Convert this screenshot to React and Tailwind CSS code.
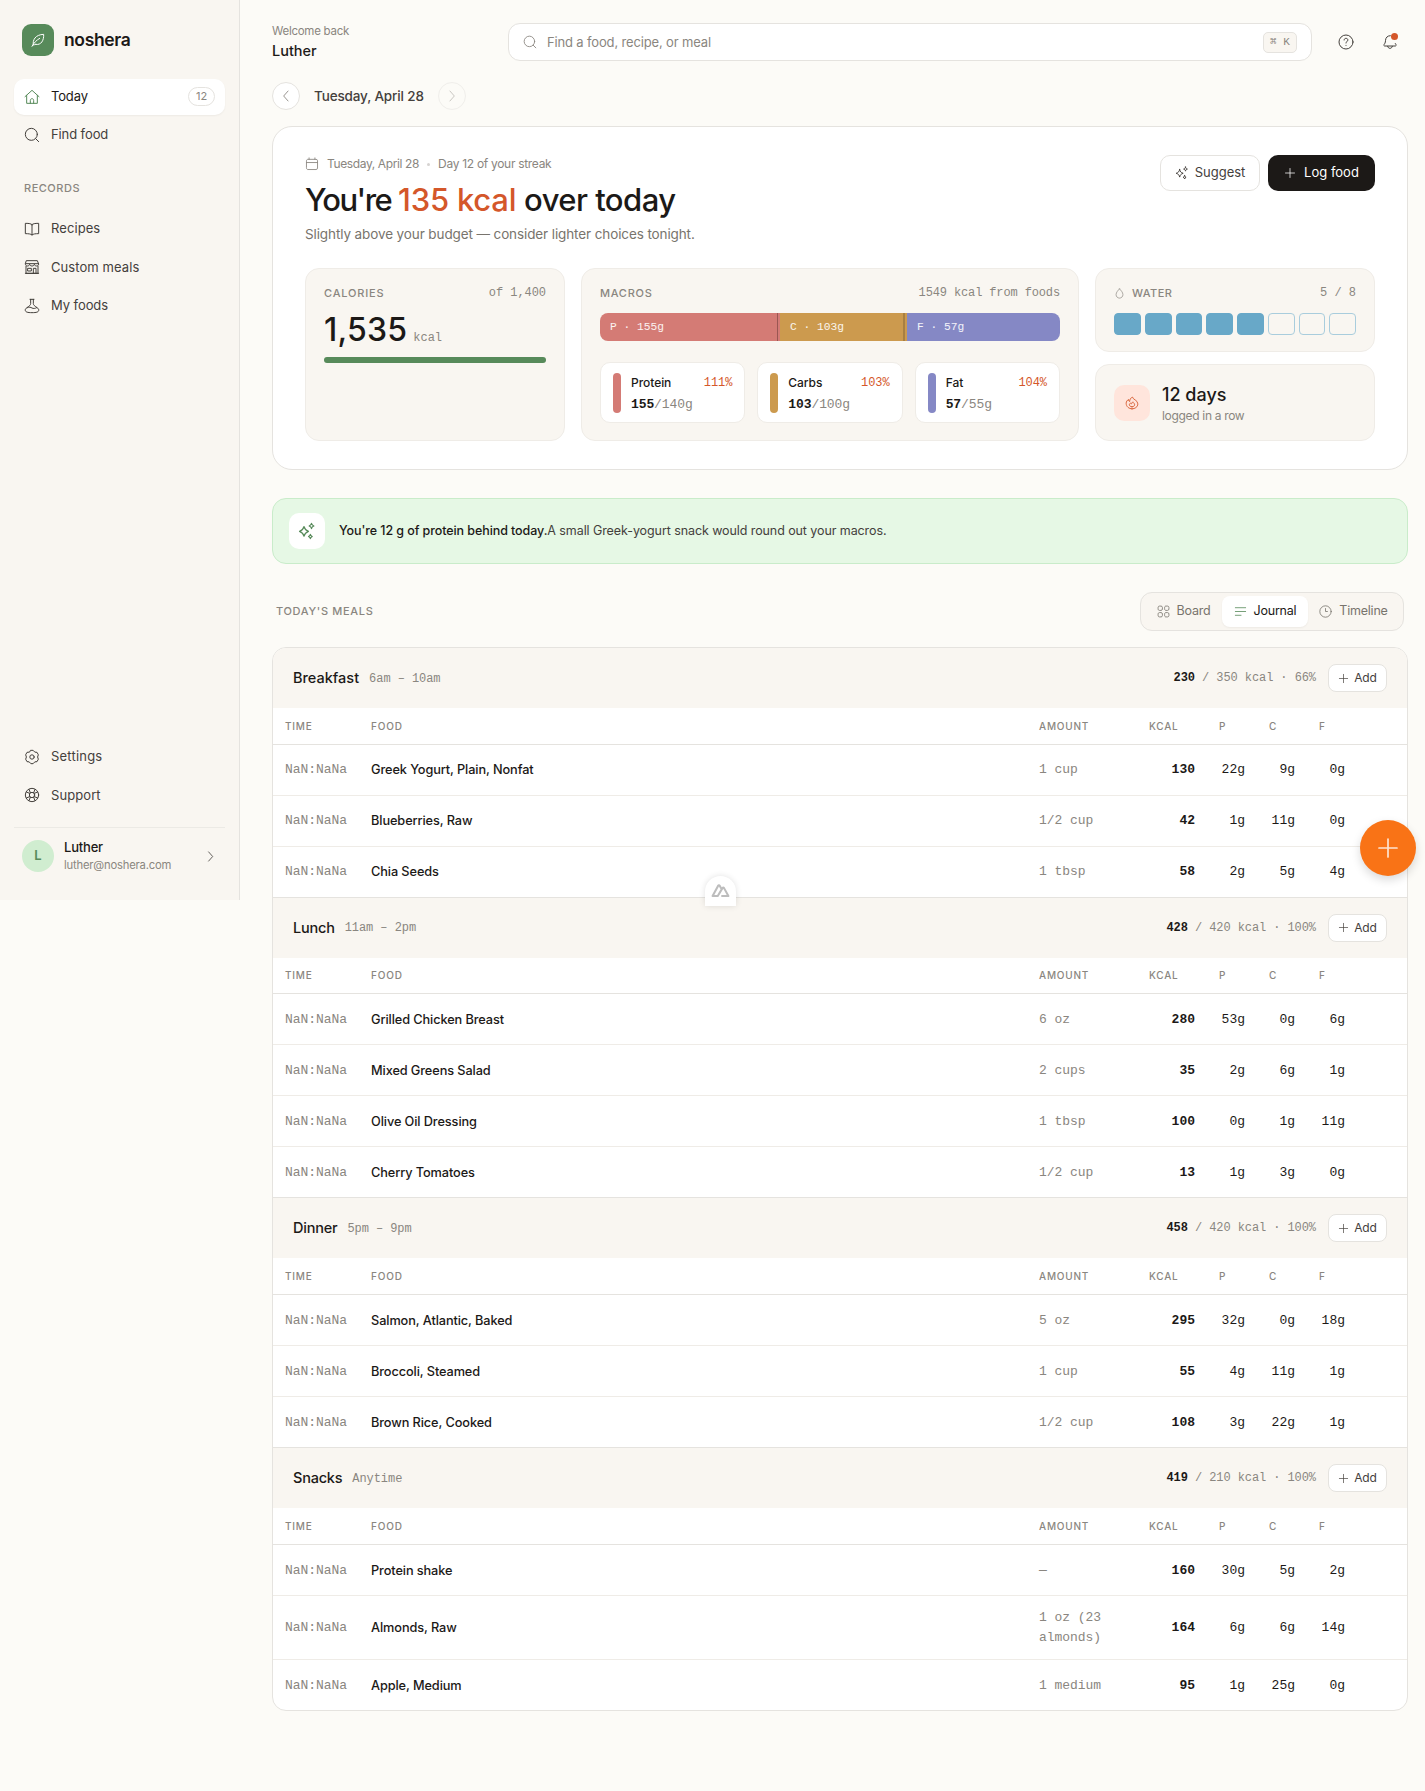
import React from "react";

const S = ({ size = 16, sw = 1.5, className = "", children }) => (
  <svg width={size} height={size} viewBox="0 0 24 24" fill="none" stroke="currentColor" strokeWidth={sw} strokeLinecap="round" strokeLinejoin="round" className={"shrink-0 " + className}>{children}</svg>
);
const Leaf = (p) => <S {...p}><path d="M5 19.500C3.500 12 8 4 20.500 3.500C21 12 17 20.500 8.500 18.500" /><path d="M3 21.500C6 16 9.500 12.500 14.500 9.500" /><path d="M5 19C6 19.500 7.500 19 8.500 18.500" /></S>;
const Home = (p) => <S {...p}><path d="M1.500 11.500L12 2L22.500 11.500" /><path d="M4 9.500V21.500H20V9.500" /><path d="M9.500 21.500V17C9.500 15.600 10.600 14.500 12 14.500S14.500 15.600 14.500 17V21.500" /></S>;
const Search = (p) => <S {...p}><circle cx="11" cy="11" r="9" /><path d="M17.500 17.500L22 22" /></S>;
const Book = (p) => <S {...p}><path d="M12 5.500V21" /><path d="M12 5.500C10.500 4 8 3.500 2 3.500V19C7 19 10 19.300 12 21C14 19.300 17 19 22 19V3.500C16 3.500 13.500 4 12 5.500Z" /></S>;
const Store = (p) => <S {...p}><path d="M3 11V21.500H21V11" /><path d="M2 21.500H22" /><path d="M4 2.500H20L22 7.500C22 9.500 20.500 10.500 19 10.500S15.500 9.500 15.500 8C15.500 9.500 14 10.500 12 10.500S8.500 9.500 8.500 8C8.500 9.500 6.500 10.500 5 10.500S2 9.500 2 7.500Z" /><path d="M2.500 7H21.500" /><path d="M6 14H11V18H6ZM14 21V14H18V21" /></S>;
const Flask = (p) => <S {...p}><path d="M9 2H15M10 2V8.500C10 10.500 8 12 5 14C2 16 1.500 17.500 2 19C2.700 21 5 22 12 22S21.300 21 22 19C22.500 17.500 22 16 19 14C16 12 14 10.500 14 8.500V2" /><path d="M5 14.500C8 13 10 14 12 15S16.500 16 19 14.500" /></S>;
const Gear = (p) => <S {...p}><path d="M10.300 2H13.700L16.200 4.700L19.500 5L21.500 8.700L20.400 12L21.500 15.300L19.500 19L16.200 19.300L13.700 22H10.300L7.800 19.300L4.500 19L2.500 15.300L3.600 12L2.500 8.700L4.500 5L7.800 4.700Z" /><circle cx="12" cy="12" r="3.300" /></S>;
const Buoy = (p) => <S {...p}><circle cx="12" cy="12" r="10" /><circle cx="12" cy="12" r="4" /><path d="M9.500 8.500L7.500 3.500M14.500 8.500L16.500 3.500M9.500 15.500L7.500 20.500M14.500 15.500L16.500 20.500M8.500 9.500L3.500 7.500M8.500 14.500L3.500 16.500M15.500 9.500L20.500 7.500M15.500 14.500L20.500 16.500" /></S>;
const Right = (p) => <S {...p}><path d="M8.500 3.500L16 12L8.500 20.500" /></S>;
const Left = (p) => <S {...p}><path d="M15.500 3.500L8 12L15.500 20.500" /></S>;
const Help = (p) => <S {...p}><circle cx="12" cy="12" r="10.500" /><path d="M9.200 9C9.200 7.500 10.400 6.500 12 6.500S14.800 7.500 14.800 9C14.800 11 12 11.300 12 13.500" /><path d="M12 17V17.100" /></S>;
const Bell = (p) => <S {...p}><path d="M12.500 2.500C8 2.500 5.500 5.500 5.300 9.500C5.100 13.500 4 14.500 3 16C2.400 17 3 18 4.200 18H19.800C21 18 21.600 17 21 16L20 14.300" /><path d="M8.500 18.500C8.800 20.300 10.200 21.500 12 21.500S15.200 20.300 15.500 18.500" /></S>;
const Cal = (p) => <S {...p}><path d="M2.500 6.500C2.500 5 3.500 4 5 4H19C20.500 4 21.500 5 21.500 6.500V19C21.500 20.500 20.500 21.500 19 21.500H5C3.500 21.500 2.500 20.500 2.500 19ZM2.500 9.500H21.500M7 1.500V4M17 1.500V4" /></S>;
const Spark = (p) => <S {...p}><path d="M8 6C9 10 10 11 14 12.500C10 14 9 15 8 19C7 15 6 14 2 12.500C6 11 7 10 8 6Z" /><path d="M18 1.800C18.500 4 19 4.500 21.200 5.300C19 6 18.500 6.500 18 8.800C17.500 6.500 17 6 14.800 5.300C17 4.500 17.500 4 18 1.800Z" /><path d="M16.500 16.500C17 18.300 17.500 18.700 19 19.300C17.500 20 17 20.400 16.500 22.200C16 20.400 15.500 20 14 19.300C15.500 18.700 16 18.300 16.500 16.500Z" /></S>;
const Plus = (p) => <S {...p}><path d="M12 3V21M3 12H21" /></S>;
const Drop = (p) => <S {...p}><path d="M12 2C9 5 4.500 9.500 4.500 14.500C4.500 19 8 22 12 22S19.500 19 19.500 14.500C19.500 9.500 15 5 12 2Z" /></S>;
const Flame = (p) => <S {...p}><path d="M12 22C6.500 22 2 18 2 12.500C2 9.500 4 7 6 6C6 8 6.500 9 8 9.500C8 6 9.500 3 13 2C13 6 22 7 22 13.500C22 18.500 17.500 22 12 22Z" /><path d="M12 18.500C9.500 18.500 7.500 17 7.500 14.800C7.500 13 9 12.500 9.500 12C10 13.500 11 13.500 11.500 13C12 12 12 11 13.500 10C14 12 16.500 12.500 16.500 15C16.500 17 14.500 18.500 12 18.500Z" /></S>;
const Grid = (p) => <S {...p}><path d="M2 4.500C2 3 3 2 4.500 2H7.500C9 2 10 3 10 4.500V7.500C10 9 9 10 7.500 10H4.500C3 10 2 9 2 7.500ZM14 4.500C14 3 15 2 16.500 2H19.500C21 2 22 3 22 4.500V7.500C22 9 21 10 19.500 10H16.500C15 10 14 9 14 7.500ZM2 16.500C2 15 3 14 4.500 14H7.500C9 14 10 15 10 16.500V19.500C10 21 9 22 7.500 22H4.500C3 22 2 21 2 19.500ZM14 16.500C14 15 15 14 16.500 14H19.500C21 14 22 15 22 16.500V19.500C22 21 21 22 19.500 22H16.500C15 22 14 21 14 19.500Z" /></S>;
const Lines = (p) => <S {...p}><path d="M2.500 5H21.500M2.500 12H21.500M2.500 19H13" /></S>;
const Clock = (p) => <S {...p}><circle cx="12" cy="12" r="10.500" /><path d="M12 6.500V12H15.500" /></S>;

const T = ({ className = "", children }) => <span className={"whitespace-nowrap " + className}>{children}</span>;
const mono = "font-['Liberation_Mono',monospace]";

const NavItem = ({ icon: Icon, label, track = "tracking-[0.08px]", active, badge }) => (
  <div className={"flex h-[36.25px] items-center gap-[11px] rounded-[10px] px-2.5 text-[13px] " + (active ? "bg-white text-[#1c1917] shadow-[0_1px_2px_rgba(0,0,0,0.05)]" : "text-[#44403c]")}>
    <Icon size={16} className={active ? "text-[#578a5a]" : ""} />
    <T className={track}>{label}</T>
    {badge && <span className="ml-auto flex h-[19px] w-[27px] items-center justify-center rounded-full border border-[#e5e3df] text-[11px] text-[#8a8680]">{badge}</span>}
  </div>
);

const MacroCard = ({ color, name, pct, val, goal }) => (
  <div className="flex h-[61px] gap-2.5 rounded-[10px] border border-[#efece7] bg-white px-3 py-2.5">
    <div className={"h-10 w-2 rounded-full " + color} />
    <div className="min-w-0 flex-1">
      <div className="flex h-5 items-center justify-between">
        <T className="text-xs font-medium tracking-[-0.05px]">{name}</T>
        <span className={"text-xs tracking-[-0.06px] text-[#d4572a] " + mono}>{pct}</span>
      </div>
      <div className={"mt-[2px] flex h-5 items-center text-[13px] tracking-[-0.1px] text-[#8a8680] " + mono}><span className="font-bold text-[#1c1917]">{val}</span>/{goal}</div>
    </div>
  </div>
);

const cols = "grid grid-cols-[86px_668px_96px_66px_50px_50px_50px_70px] items-center";
const meals = [
  { name: "Breakfast", time: "6am – 10am", got: "230", goal: "350", pct: "66%", rows: [["Greek Yogurt, Plain, Nonfat", "1 cup", "130", "22g", "9g", "0g"], ["Blueberries, Raw", "1/2 cup", "42", "1g", "11g", "0g"], ["Chia Seeds", "1 tbsp", "58", "2g", "5g", "4g"]] },
  { name: "Lunch", time: "11am – 2pm", got: "428", goal: "420", pct: "100%", rows: [["Grilled Chicken Breast", "6 oz", "280", "53g", "0g", "6g"], ["Mixed Greens Salad", "2 cups", "35", "2g", "6g", "1g"], ["Olive Oil Dressing", "1 tbsp", "100", "0g", "1g", "11g"], ["Cherry Tomatoes", "1/2 cup", "13", "1g", "3g", "0g"]] },
  { name: "Dinner", time: "5pm – 9pm", got: "458", goal: "420", pct: "100%", rows: [["Salmon, Atlantic, Baked", "5 oz", "295", "32g", "0g", "18g"], ["Broccoli, Steamed", "1 cup", "55", "4g", "11g", "1g"], ["Brown Rice, Cooked", "1/2 cup", "108", "3g", "22g", "1g"]] },
  { name: "Snacks", time: "Anytime", got: "419", goal: "210", pct: "100%", rows: [["Protein shake", "—", "160", "30g", "5g", "2g"], ["Almonds, Raw", "1 oz (23 almonds)", "164", "6g", "6g", "14g"], ["Apple, Medium", "1 medium", "95", "1g", "25g", "0g"]] },
];

const Meal = ({ m, first }) => (
  <section>
    <header className={"flex items-center bg-[#f9f6f1] px-5 " + (first ? "h-[60px]" : "h-[61px] border-t border-[#e5e3df]")}>
      <T className={"text-[14.5px] font-medium " + (first ? "" : "tracking-[-0.22px]")}>{m.name}</T>
      <span className={"mt-px ml-2.5 text-xs tracking-[-0.06px] text-[#8a8680] " + mono}>{m.time}</span>
      <span className={"ml-auto text-xs tracking-[-0.08px] text-[#8a8680] " + mono}><b className="text-[#1c1917]">{m.got}</b> / {m.goal} kcal · {m.pct}</span>
      <button className="ml-3 flex h-7 w-[59px] items-center justify-center gap-[5px] rounded-lg border border-[#e5e3df] bg-white text-xs tracking-[-0.15px] text-[#44403c]"><Plus size={11} />Add</button>
    </header>
    <div className={cols + " border-b border-[#e5e3df] px-3 pt-px text-[10px] font-medium tracking-[0.8px] text-[#8a8680] " + (first ? "h-[36.5px]" : "h-[36.85px]")}>
      <span>TIME</span><span>FOOD</span><span>AMOUNT</span><span className="pl-3.5">KCAL</span><span className="pl-[18px]">P</span><span className="pl-[18px]">C</span><span className="pl-[18px]">F</span>
    </div>
    {m.rows.map((r, i) => (
      <div key={i} className={cols + " px-3 text-[13px] " + (first ? "" : "pt-px ") + (i === m.rows.length - 1 ? "h-[50px]" : r[1].length > 12 ? "h-16 border-b border-[#efece7]" : "h-[51px] border-b border-[#efece7]")}>
        <span className={"tracking-[-0.05px] text-[#8a8680] " + mono}>NaN:NaNa</span>
        <T className="text-[12.75px] font-medium tracking-[-0.1px]">{r[0]}</T>
        <span className={"pr-5 leading-5 tracking-[-0.05px] text-[#8a8680] " + mono}>{r[1]}</span>
        <span className={"pr-1.5 text-right font-bold " + mono}>{r[2]}</span>
        <span className={"pr-1.5 text-right " + mono}>{r[3]}</span>
        <span className={"pr-1.5 text-right " + mono}>{r[4]}</span>
        <span className={"pr-1.5 text-right " + mono}>{r[5]}</span>
      </div>
    ))}
  </section>
);

export default function App() {
  return (
    <div className="relative flex h-[1791px] w-[1425px] items-start bg-[#fcfbf7] font-['Inter',sans-serif] text-[#1c1917]">
      <aside className="flex h-[900px] w-60 shrink-0 flex-col border-r border-[#e5e3df] bg-[#f9f6f1] px-3.5">
        <div className="mt-6 flex items-center gap-2.5 px-2">
          <div className="flex size-8 items-center justify-center rounded-[9px] bg-[#578a5a] text-white"><Leaf size={16} /></div>
          <T className="text-[17.5px] font-semibold tracking-[-0.35px]">noshera</T>
        </div>
        <nav className="mt-[22.5px] flex flex-col gap-[2px]">
          <NavItem icon={Home} label="Today" track="tracking-[-0.15px]" active badge="12" />
          <NavItem icon={Search} label="Find food" track="tracking-[-0.1px]" />
        </nav>
        <T className="mt-[27px] px-2.5 text-[11px] font-medium tracking-[0.51px] text-[#8a8680]">RECORDS</T>
        <nav className="mt-[14.5px] flex flex-col gap-[2px]">
          <NavItem icon={Book} label="Recipes" />
          <NavItem icon={Store} label="Custom meals" />
          <NavItem icon={Flask} label="My foods" track="tracking-[-0.07px]" />
        </nav>
        <nav className="mt-auto flex flex-col gap-[2px]">
          <NavItem icon={Gear} label="Settings" track="tracking-[0.2px]" />
          <NavItem icon={Buoy} label="Support" />
        </nav>
        <div className="mt-[13.5px] mb-[26px] flex items-center border-t border-[#eceae5] px-2 pt-2.5">
          <div className="flex size-8 items-center justify-center rounded-full bg-[#d0edd0] text-[13px] font-semibold text-[#578a5a]">L</div>
          <div className="ml-2.5 flex flex-col gap-px">
            <T className="text-[13px] leading-[18px] font-medium tracking-[-0.2px]">Luther</T>
            <T className="text-[11.25px] leading-[17px] tracking-[-0.2px] text-[#8a8680]">luther@noshera.com</T>
          </div>
          <Right size={13} className="ml-auto text-[#44403c]" />
        </div>
      </aside>

      <main className="ml-8 w-[1136px]">
        <div className="flex h-[82px] items-center pt-[2px]">
          <div className="flex w-[236px] flex-col">
            <T className="text-[11.5px] leading-4 tracking-[-0.27px] text-[#8a8680]">Welcome back</T>
            <T className="mt-px text-[14.5px] leading-[22px] font-medium">Luther</T>
          </div>
          <div className="flex h-[38px] w-[804px] items-center rounded-xl border border-[#e5e3df] bg-white px-[14px] text-[13px] text-[#8a8680]">
            <Search size={14} />
            <T className="mt-px ml-[10px] tracking-[-0.15px]">Find a food, recipe, or meal</T>
            <span className={"ml-auto flex h-[21px] w-[34px] items-center justify-center rounded-[5px] border border-[#e5e3df] bg-[#f9f6f1] text-[11px] " + mono}>⌘ K</span>
          </div>
          <Help size={16} className="ml-[26px] text-[#44403c]" />
          <span className="relative ml-7 text-[#44403c]"><Bell size={16} /><i className="absolute -top-px right-0 size-[7px] rounded-full bg-[#d4572a]" /></span>
        </div>
        <div className="flex h-7 items-center">
          <span className="flex size-7 items-center justify-center rounded-full border border-[#e5e3df] bg-white text-[#8a8680]"><Left size={14} /></span>
          <T className="ml-3.5 w-[124px] text-[13.5px] font-medium tracking-[-0.14px] text-[#44403c]">Tuesday, April 28</T>
          <span className="flex size-7 items-center justify-center rounded-full border border-[#e5e3df] text-[#8a8680] opacity-50"><Right size={14} /></span>
        </div>

        <section className="mt-4 h-[344px] rounded-[20px] border border-[#e5e3df] bg-white px-8 pt-7">
          <div className="flex justify-between">
            <div className="flex flex-col">
              <div className="flex h-[18px] items-center text-xs text-[#8a8680]"><Cal size={14} /><T className="ml-2 tracking-[-0.38px]">Tuesday, April 28</T><i className="mx-2 size-[3px] rounded-full bg-[#d6d3d1]" /><T className="tracking-[-0.3px]">Day 12 of your streak</T></div>
              <h1 className="mt-[7px] text-[31px] leading-10 font-medium tracking-[-0.55px] whitespace-nowrap"><span className="tracking-[-1.55px]">You're </span><span className="tracking-[-0.2px] text-[#d4572a]">135 kcal</span> over today</h1>
              <p className="mt-1 text-[13.500px] leading-5 tracking-[-0.11px] whitespace-nowrap text-[#78746d]">Slightly above your budget — consider lighter choices tonight.</p>
            </div>
            <div className="flex gap-2 text-[13px]">
              <button className="flex h-9 w-[100px] items-center justify-center gap-1.5 rounded-[10px] border border-[#e5e3df] text-[#44403c]"><Spark size={14} sw={1.7} />Suggest</button>
              <button className="flex h-9 w-[107px] items-center justify-center gap-2 rounded-[10px] bg-[#1c1917] text-white"><Plus size={12} />Log food</button>
            </div>
          </div>
          <div className="mt-[23.5px] grid h-[173.5px] grid-cols-[260px_498px_280px] gap-4">
            <div className="rounded-[14px] border border-[#efece7] bg-[#f9f6f1] px-[18px] pt-[15.5px]">
              <div className="flex h-[18px] items-center justify-between text-[#8a8680]"><T className="text-[11px] font-medium tracking-[0.82px]">CALORIES</T><span className={"text-xs tracking-[-0.06px] " + mono}>of 1,400</span></div>
              <div className="mt-2 flex items-baseline gap-1.5"><T className="text-[32px] leading-10 font-medium tracking-[0.2px]">1,535</T><span className={"text-xs text-[#8a8680] " + mono}>kcal</span></div>
              <div className="mt-[7px] h-1.5 rounded-full bg-[#578a5a]" />
            </div>
            <div className="rounded-[14px] border border-[#efece7] bg-[#f9f6f1] px-[18px] pt-[15.5px]">
              <div className="flex h-[18px] items-center justify-between text-[#8a8680]"><T className="text-[11px] font-medium tracking-[0.72px]">MACROS</T><span className={"text-xs tracking-[-0.13px] " + mono}>1549 kcal from foods</span></div>
              <div className={"mt-[11px] flex h-7 overflow-hidden rounded-lg text-[11.25px] text-white/90 " + mono}>
                <div className="flex w-[180px] items-center bg-[#d47b75] pl-2.5">P · 155g<i className="mr-[2px] ml-auto h-full w-px bg-[#9a5653]" /></div>
                <div className="flex w-[127px] items-center bg-[#cc9a4e] pl-2.5">C · 103g<i className="mr-[2px] ml-auto h-full w-[2px] bg-[#a87f42]" /></div>
                <div className="flex flex-1 items-center bg-[#8588c5] pl-2.5">F · 57g</div>
              </div>
              <div className="mt-[21px] grid grid-cols-3 gap-3">
                <MacroCard color="bg-[#d47b75]" name="Protein" pct="111%" val="155" goal="140g" />
                <MacroCard color="bg-[#cc9a4e]" name="Carbs" pct="103%" val="103" goal="100g" />
                <MacroCard color="bg-[#8588c5]" name="Fat" pct="104%" val="57" goal="55g" />
              </div>
            </div>
            <div className="flex flex-col justify-between">
              <div className="h-[84px] rounded-[14px] border border-[#efece7] bg-[#f9f6f1] px-[18px] pt-[15.5px]">
                <div className="flex h-[18px] items-center text-[#8a8680]"><Drop size={11} /><T className="ml-[7px] text-[11px] font-medium tracking-[0.42px]">WATER</T><span className={"ml-auto text-xs " + mono}>5 / 8</span></div>
                <div className="mt-[11px] grid h-[22px] grid-cols-8 gap-1">{[0, 1, 2, 3, 4, 5, 6, 7].map((i) => <i key={i} className={"rounded-[4px] border " + (i < 5 ? "border-[#68a8c8] bg-[#68a8c8]" : "border-[#a9cddd]")} />)}</div>
              </div>
              <div className="flex h-[77px] items-center rounded-[14px] border border-[#efece7] bg-[#f9f6f1] px-[18px]">
                <div className="flex size-9 items-center justify-center rounded-[10px] bg-[#ffe5dc] text-[#d4572a]"><Flame size={14} /></div>
                <div className="ml-3 flex flex-col pt-[2px]"><T className="text-lg leading-6 font-medium">12 days</T><T className="text-xs leading-[18px] tracking-[-0.32px] text-[#8a8680]">logged in a row</T></div>
              </div>
            </div>
          </div>
        </section>

        <div className="mt-7 flex h-[66px] items-center rounded-[14px] border border-[#c9ecca] bg-[#e6f8e5] px-4 text-[12.500px] text-[#44403c]">
          <span className="flex size-9 items-center justify-center rounded-[10px] bg-white text-[#578a5a]"><Spark size={18} /></span>
          <T className="ml-3.5 font-medium tracking-[-0.08px] text-[#1c1917]">You're 12 g of protein behind today.</T><T className="tracking-[-0.085px]">A small Greek-yogurt snack would round out your macros.</T>
        </div>

        <div className="mt-7 flex h-[39px] items-center justify-between px-1">
          <T className="text-[11px] font-medium tracking-[0.67px] text-[#8a8680]">TODAY'S MEALS</T>
          <div className="flex h-[39px] w-[264px] items-center rounded-xl border border-[#e5e3df] bg-[#f9f6f1] p-1 text-[12.500px] tracking-[-0.22px] text-[#78746d]">
            <span className="flex h-[31px] w-[77px] items-center justify-center gap-[7px]"><Grid size={13} />Board</span>
            <span className="flex h-[31px] w-[86px] items-center justify-center gap-[7px] rounded-lg bg-white text-[#1c1917] shadow-[0_1px_2px_rgba(0,0,0,0.05)]"><Lines size={13} className="text-[#578a5a]" />Journal</span>
            <span className="flex h-[31px] flex-1 items-center justify-center gap-[7px]"><Clock size={13} />Timeline</span>
          </div>
        </div>

        <div className="mt-4 overflow-hidden rounded-[14px] border border-[#e5e3df] bg-white">
          {meals.map((m, i) => <Meal key={m.name} m={m} first={i === 0} />)}
        </div>
      </main>

      <button className="absolute top-[820px] left-[1360px] flex size-14 items-center justify-center rounded-full bg-[#f97316] text-white/80 shadow-[0_4px_10px_rgba(0,0,0,0.15)]"><Plus size={24} sw={1.7} /></button>
      <div className="absolute top-[876px] left-[705px] flex h-[29.5px] w-[31px] items-center justify-center rounded-t-full bg-white text-[#bdbdbd] shadow-[0_0_6px_rgba(0,0,0,0.12)]">
        <S size={19} sw={2.600}><path d="M2 19L8.700 6.500Q10 4.500 11.300 6.500L13 9.500M2 19H8.500L14.500 9Q15.500 7.500 16.500 9L22 19H14" /></S>
      </div>
    </div>
  );
}
